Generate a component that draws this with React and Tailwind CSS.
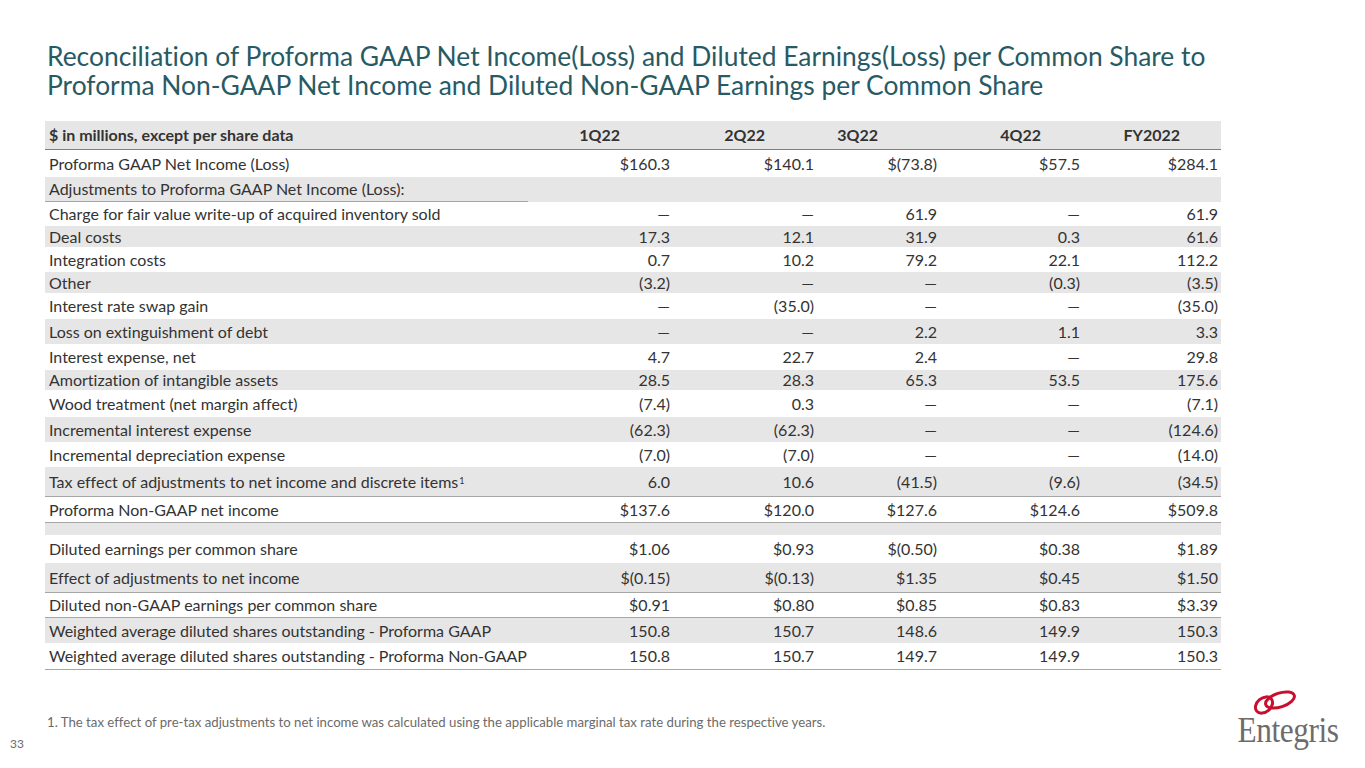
import React from "react";

const colW = ["w-[145px]", "w-[144px]", "w-[123px]", "w-[143px]", "w-[138px]"];
const headPad = ["pr-[53px]", "pr-[52px]", "pr-[62px]", "pr-[42px]", "pr-[41px]"];

const rows = [
  { label: "Proforma GAAP Net Income (Loss)", v: ["$160.3", "$140.1", "$(73.8)", "$57.5", "$284.1"], cls: "h-[27px] bg-white" },
  { label: "Adjustments to Proforma GAAP Net Income (Loss):", v: ["", "", "", "", ""], cls: "h-[25px] bg-[#e7e6e6]", labelCls: "border-b border-[#a6a6a6]" },
  { label: "Charge for fair value write-up of acquired inventory sold", v: ["—", "—", "61.9", "—", "61.9"], cls: "h-[24px] bg-white" },
  { label: "Deal costs", v: ["17.3", "12.1", "31.9", "0.3", "61.6"], cls: "h-[21px] bg-[#e7e6e6]" },
  { label: "Integration costs", v: ["0.7", "10.2", "79.2", "22.1", "112.2"], cls: "h-[25px] bg-white" },
  { label: "Other", v: ["(3.2)", "—", "—", "(0.3)", "(3.5)"], cls: "h-[21px] bg-[#e7e6e6]" },
  { label: "Interest rate swap gain", v: ["—", "(35.0)", "—", "—", "(35.0)"], cls: "h-[26px] bg-white" },
  { label: "Loss on extinguishment of debt", v: ["—", "—", "2.2", "1.1", "3.3"], cls: "h-[25px] bg-[#e7e6e6]" },
  { label: "Interest expense, net", v: ["4.7", "22.7", "2.4", "—", "29.8"], cls: "h-[26px] bg-white" },
  { label: "Amortization of intangible assets", v: ["28.5", "28.3", "65.3", "53.5", "175.6"], cls: "h-[20px] bg-[#e7e6e6]" },
  { label: "Wood treatment (net margin affect)", v: ["(7.4)", "0.3", "—", "—", "(7.1)"], cls: "h-[27px] bg-white" },
  { label: "Incremental interest expense", v: ["(62.3)", "(62.3)", "—", "—", "(124.6)"], cls: "h-[25px] bg-[#e7e6e6]" },
  { label: "Incremental depreciation expense", v: ["(7.0)", "(7.0)", "—", "—", "(14.0)"], cls: "h-[25px] bg-white" },
  { label: "Tax effect of adjustments to net income and discrete items", sup: "1", v: ["6.0", "10.6", "(41.5)", "(9.6)", "(34.5)"], cls: "h-[30px] bg-[#e7e6e6] border-b border-[#a6a6a6]" },
  { label: "Proforma Non-GAAP net income", v: ["$137.6", "$120.0", "$127.6", "$124.6", "$509.8"], cls: "h-[26px] bg-white border-b border-[#a6a6a6]" },
  { spacer: true, cls: "h-[12px] bg-[#e7e6e6]" },
  { label: "Diluted earnings per common share", v: ["$1.06", "$0.93", "$(0.50)", "$0.38", "$1.89"], cls: "h-[28px] bg-white" },
  { label: "Effect of adjustments to net income", v: ["$(0.15)", "$(0.13)", "$1.35", "$0.45", "$1.50"], cls: "h-[30px] bg-[#e7e6e6] border-b border-[#a6a6a6]" },
  { label: "Diluted non-GAAP earnings per common share", v: ["$0.91", "$0.80", "$0.85", "$0.83", "$3.39"], cls: "h-[25px] bg-white border-b border-[#a6a6a6]" },
  { label: "Weighted average diluted shares outstanding - Proforma GAAP", v: ["150.8", "150.7", "148.6", "149.9", "150.3"], cls: "h-[25px] bg-[#e7e6e6]" },
  { label: "Weighted average diluted shares outstanding - Proforma Non-GAAP", v: ["150.8", "150.7", "149.7", "149.9", "150.3"], cls: "h-[27px] bg-white border-b border-[#a6a6a6]" },
];

function Logo() {
  return (
    <div className="flex flex-col items-center w-[106px]">
      <svg width="46" height="25" viewBox="0 0 46 25" className="ml-[-26px]">
        <ellipse cx="12" cy="15" rx="9.5" ry="7" transform="rotate(-40 12 15)" fill="none" stroke="#c8102e" strokeWidth="3" />
        <ellipse cx="28" cy="10" rx="15" ry="7" transform="rotate(-18 28 10)" fill="none" stroke="#c8102e" strokeWidth="3" />
      </svg>
      <div className="font-['Liberation_Serif',serif] text-[36px] leading-none text-[#6f6b6b] scale-x-[0.87] mt-[-3px] tracking-[-0.5px]">
        Entegris
      </div>
    </div>
  );
}

export default function App() {
  return (
    <div className="w-[1365px] h-[768px] bg-white overflow-hidden flex flex-col font-['Lato',sans-serif] text-[#333333] [font-variant-ligatures:none]">
      <h1 className="pl-[47px] pt-[42px] text-[#285a64] text-[26.4px] leading-[29px] font-normal whitespace-nowrap">
        <div>Reconciliation of Proforma GAAP Net Income(Loss) and Diluted Earnings(Loss) per Common Share to</div>
        <div>Proforma Non-GAAP Net Income and Diluted Non-GAAP Earnings per Common Share</div>
      </h1>

      <div className="ml-[45px] mt-[21px] w-[1176px] text-[16px]">
        <div className="flex items-center h-[29px] bg-[#e7e6e6] border-b border-[#7f7f7f] font-bold">
          <div className="w-[483px] pl-[4px]">$ in millions, except per share data</div>
          {["1Q22", "2Q22", "3Q22", "4Q22", "FY2022"].map((h, i) => (
            <div key={h} className={`${colW[i]} ${headPad[i]} text-right`}>{h}</div>
          ))}
        </div>
        {rows.map((r, ri) =>
          r.spacer ? (
            <div key={ri} className={r.cls} />
          ) : (
            <div key={ri} className={`flex items-stretch ${r.cls}`}>
              <div className={`w-[483px] pl-[4px] flex items-center whitespace-nowrap ${r.labelCls || ""}`}>
                <span>
                  {r.label}
                  {r.sup && <sup className="text-[9px] relative top-[-4px] ml-[1px]">{r.sup}</sup>}
                </span>
              </div>
              {r.v.map((val, i) => (
                <div key={i} className={`${colW[i]} pr-[3px] flex items-center justify-end`}>
                  {val}
                </div>
              ))}
            </div>
          )
        )}
      </div>

      <div className="mt-[20px] flex items-start justify-between pr-[24px]">
        <div className="flex flex-col text-[#6b6b6b] mt-[24px]">
          <div className="pl-[47px] text-[13.2px] leading-[16px] whitespace-nowrap">
            1. The tax effect of pre-tax adjustments to net income was calculated using the applicable marginal tax rate during the respective years.
          </div>
          <div className="pl-[10px] mt-[6px] text-[12px] leading-[16px]">33</div>
        </div>
        <Logo />
      </div>
    </div>
  );
}
